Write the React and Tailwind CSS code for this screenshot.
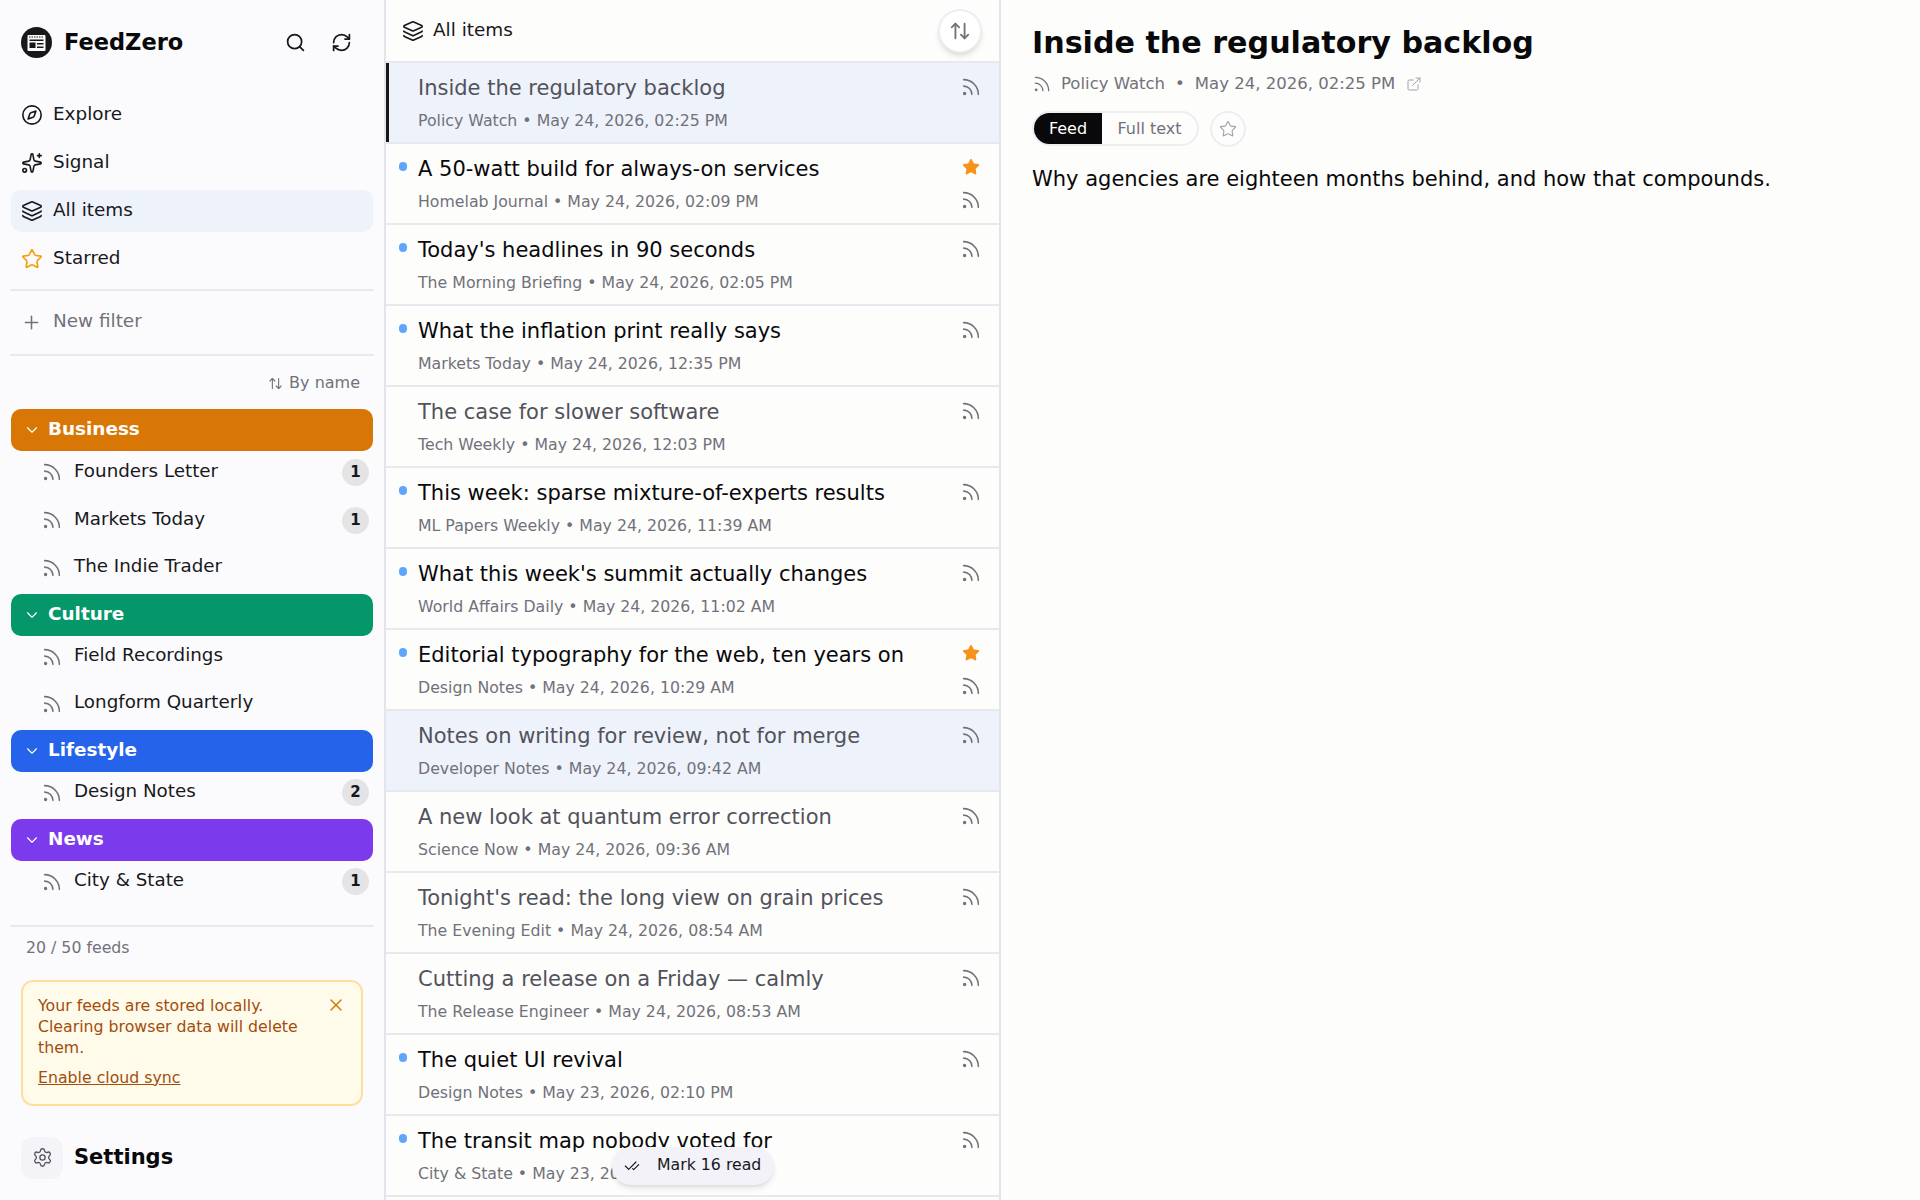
import { Search, RefreshCw, Compass, Sparkles, Layers, Star, Plus, ArrowUpDown, Rss, ChevronDown, X, Settings, CheckCheck, ExternalLink } from 'lucide-react';

const NAV_TOP = [
  { label: 'Explore', icon: <Compass size={22} strokeWidth={1.75} /> },
  { label: 'Signal', icon: <Sparkles size={22} strokeWidth={1.75} /> },
  { label: 'All items', icon: <Layers size={22} strokeWidth={1.75} />, active: true },
  { label: 'Starred', icon: <Star size={22} strokeWidth={1.75} className="text-[#f59e0b]" /> },
];

const GROUPS = [
  { name: 'Business', bg: 'bg-[#d97706]', feeds: [['Founders Letter', 1, 'h-[48px]'], ['Markets Today', 1, 'h-[48px]'], ['The Indie Trader', 0, 'h-[47px]']] },
  { name: 'Culture', bg: 'bg-[#059669]', feeds: [['Field Recordings', 0, 'h-[47px]'], ['Longform Quarterly', 0, 'h-[47px]']] },
  { name: 'Lifestyle', bg: 'bg-[#2563eb]', feeds: [['Design Notes', 2, 'h-[47px]']] },
  { name: 'News', bg: 'bg-[#7c3aed]', feeds: [['City & State', 1, 'h-[47px]']] },
];

const ITEMS = [
  { title: 'Inside the regulatory backlog', meta: 'Policy Watch • May 24, 2026, 02:25 PM', selected: true },
  { title: 'A 50-watt build for always-on services', meta: 'Homelab Journal • May 24, 2026, 02:09 PM', unread: true, starred: true },
  { title: "Today's headlines in 90 seconds", meta: 'The Morning Briefing • May 24, 2026, 02:05 PM', unread: true },
  { title: 'What the inflation print really says', meta: 'Markets Today • May 24, 2026, 12:35 PM', unread: true },
  { title: 'The case for slower software', meta: 'Tech Weekly • May 24, 2026, 12:03 PM' },
  { title: 'This week: sparse mixture-of-experts results', meta: 'ML Papers Weekly • May 24, 2026, 11:39 AM', unread: true },
  { title: "What this week's summit actually changes", meta: 'World Affairs Daily • May 24, 2026, 11:02 AM', unread: true },
  { title: 'Editorial typography for the web, ten years on', meta: 'Design Notes • May 24, 2026, 10:29 AM', unread: true, starred: true },
  { title: 'Notes on writing for review, not for merge', meta: 'Developer Notes • May 24, 2026, 09:42 AM', hover: true },
  { title: 'A new look at quantum error correction', meta: 'Science Now • May 24, 2026, 09:36 AM' },
  { title: "Tonight's read: the long view on grain prices", meta: 'The Evening Edit • May 24, 2026, 08:54 AM' },
  { title: 'Cutting a release on a Friday — calmly', meta: 'The Release Engineer • May 24, 2026, 08:53 AM' },
  { title: 'The quiet UI revival', meta: 'Design Notes • May 23, 2026, 02:10 PM', unread: true },
  { title: 'The transit map nobody voted for', meta: 'City & State • May 23, 2026, 01:44 PM', unread: true },
];

function LogoIcon() {
  return (
    <div className="w-[31px] h-[31px] rounded-full bg-[#18181b] flex items-center justify-center shrink-0">
      <svg width="19" height="18" viewBox="0 0 19 18" fill="none">
        <rect x="0.5" y="1" width="18" height="16" rx="1" fill="#fafafa" />
        <path d="M2 3h15" stroke="#18181b" strokeWidth="1" strokeDasharray="1.5 1" />
        <rect x="2.5" y="5.5" width="14" height="1.5" fill="#18181b" />
        <rect x="2.5" y="8.5" width="6" height="5.5" fill="#18181b" />
        <rect x="10" y="9" width="6.5" height="1.5" fill="#18181b" />
        <rect x="10" y="12.5" width="6.5" height="1.5" fill="#18181b" />
      </svg>
    </div>
  );
}

function GroupBlock({ group }) {
  return (
    <div>
      <div className={`h-[42px] rounded-[10px] ${group.bg} flex items-center pl-[12px] gap-[7px] text-white`}>
        <ChevronDown size={18} strokeWidth={1.5} />
        <span className="text-[18.4px] font-bold leading-none -mt-[2px]">{group.name}</span>
      </div>
      {group.feeds.map(([name, count, height]) => (
        <div key={name} className={`${height} flex items-center pl-[30px] pr-[4px] pb-[6px]`}>
          <Rss size={22} strokeWidth={1.75} className="text-[#71717a] shrink-0" />
          <span className="ml-[11px] text-[18.3px] text-[#18181b] flex-1 -mt-[3px]">{name}</span>
          {count > 0 && (
            <span className="w-[27px] h-[27px] rounded-full bg-[#e4e4e7] text-[15px] font-bold flex items-center justify-center text-[#18181b]">{count}</span>
          )}
        </div>
      ))}
    </div>
  );
}

function Sidebar() {
  return (
    <aside className="w-[386px] shrink-0 h-[1200px] bg-[#fbfbfd] border-r-2 border-[#e4e4ec] flex flex-col overflow-hidden">
      <div className="h-[85px] pl-[21px] pr-[32px] flex items-center">
        <LogoIcon />
        <span className="ml-[12px] text-[22.5px] font-bold text-[#09090b] flex-1">FeedZero</span>
        <Search size={21} strokeWidth={2} className="text-[#18181b] mr-[25px]" />
        <RefreshCw size={21} strokeWidth={2} className="text-[#18181b]" />
      </div>
      <nav className="px-[11px] pt-[9px]">
        {NAV_TOP.map(item => (
          <div key={item.label} className={`h-[42px] mb-[6px] rounded-[10px] flex items-center pl-[10px] gap-[10px] text-[18.4px] text-[#18181b] ${item.active ? 'bg-[#eef2fb]' : ''}`}>
            {item.icon}
            <span className="-mt-[3px]">{item.label}</span>
          </div>
        ))}
      </nav>
      <div className="mx-[10px] mt-[3px] border-t-2 border-[#e8e8ee]" />
      <div className="h-[63px] pl-[21px] flex items-center gap-[11px] text-[18.4px] text-[#71717a]">
        <Plus size={21} strokeWidth={1.75} />
        <span className="-mt-[3px]">New filter</span>
      </div>
      <div className="mx-[10px] border-t-2 border-[#e8e8ee]" />
      <div className="h-[53px] pr-[24px] flex items-center justify-end gap-[6px] text-[16px] text-[#71717a]">
        <ArrowUpDown size={15} strokeWidth={1.75} className="mt-[2px]" />
        <span>By name</span>
      </div>
      <div className="px-[11px] flex flex-col">
        {GROUPS.map(g => <GroupBlock key={g.name} group={g} />)}
      </div>
      <div className="mx-[10px] mt-[17px] border-t-2 border-[#e8e8ee]" />
      <div className="pl-[26px] pt-[9px] text-[15.75px] text-[#71717a]">20 / 50 feeds</div>
      <div className="mx-[21px] mt-[20px] h-[126px] rounded-[12px] border-2 border-[#fde0a0] bg-[#fffbeb] px-[15px] pt-[13px] text-[15.75px] leading-[21px] text-[#a34d0c] relative">
        <p className="w-[270px]">Your feeds are stored locally. Clearing browser data will delete them.</p>
        <a className="block mt-[9px] underline">Enable cloud sync</a>
        <X size={20} strokeWidth={1.75} className="absolute top-[13px] right-[15px] text-[#d97706]" />
      </div>
      <div className="pl-[21px] mt-[31px] flex items-center gap-[11px]">
        <div className="w-[42px] h-[42px] rounded-[12px] bg-[#f4f4f8] flex items-center justify-center">
          <Settings size={21} strokeWidth={1.5} className="text-[#52525b]" />
        </div>
        <span className="text-[21px] font-bold text-[#09090b]">Settings</span>
      </div>
    </aside>
  );
}

function ItemRow({ item }) {
  const read = !item.unread;
  const bg = item.selected || item.hover ? 'bg-[#eef2fb]' : '';
  return (
    <div className={`relative h-[81px] shrink-0 border-b-2 border-[#e8e8ee] pl-[32px] pr-[17px] pt-[9px] flex ${bg}`}>
      {item.selected && <div className="absolute left-0 top-0 bottom-0 w-[3px] bg-[#18181b]" />}
      {item.unread && <div className="absolute left-[13px] top-[18px] w-[8px] h-[9px] rounded-full bg-[#60a5fa]" />}
      <div className="flex-1 min-w-0">
        <div className={`text-[21px] leading-[32px] whitespace-nowrap ${read ? 'text-[#52525b]' : 'text-[#09090b]'}`}>{item.title}</div>
        <div className="text-[15.75px] leading-[24px] mt-[5px] text-[#71717a] whitespace-nowrap">{item.meta}</div>
      </div>
      <div className="w-[22px] flex flex-col items-center pt-[4px]">
        {item.starred && <Star size={18} fill="#f7931a" strokeWidth={1.5} className="text-[#f7931a] mt-[1px] mb-[13px]" />}
        <Rss size={22} strokeWidth={1.75} className="text-[#71717a]" />
      </div>
    </div>
  );
}

function ItemList() {
  return (
    <section className="w-[615px] shrink-0 h-[1200px] border-r-2 border-[#e4e4ec] bg-[#fdfdfc] flex flex-col overflow-hidden relative">
      <div className="h-[63px] shrink-0 border-b-2 border-[#e8e8ee] pl-[16px] pr-[17px] flex items-center">
        <Layers size={22} strokeWidth={1.75} className="text-[#18181b]" />
        <span className="ml-[9px] text-[18.4px] text-[#18181b] flex-1 -mt-[2px]">All items</span>
        <button className="w-[44px] h-[44px] rounded-full border-2 border-[#eeeef2] bg-white shadow-md flex items-center justify-center text-[#71717a]">
          <ArrowUpDown size={22} strokeWidth={2} />
        </button>
      </div>
      {ITEMS.map(item => <ItemRow key={item.title} item={item} />)}
      <div className="absolute left-[226px] top-[1147px] h-[38px] pl-[12px] pr-[13px] rounded-full bg-[#f2f2f8] shadow-md flex items-center gap-[17px] text-[15.75px] text-[#18181b]">
        <CheckCheck size={16} strokeWidth={1.75} />
        <span className="-mt-[2px]">Mark 16 read</span>
      </div>
    </section>
  );
}

function Reader() {
  return (
    <main className="flex-1 h-[1200px] bg-[#fdfdfc] pl-[31px] pt-[19px]">
      <h1 className="text-[30.15px] leading-[48px] font-bold text-[#09090b]">Inside the regulatory backlog</h1>
      <div className="flex items-center mt-[5px] text-[16.5px] text-[#71717a]">
        <Rss size={20} strokeWidth={1.5} className="mr-[9px]" />
        <span>Policy Watch</span>
        <span className="mx-[10px]">•</span>
        <span>May 24, 2026, 02:25 PM</span>
        <ExternalLink size={16} strokeWidth={1.5} className="ml-[11px] text-[#a1a1aa]" />
      </div>
      <div className="flex items-center mt-[14px] gap-[11px]">
        <div className="flex h-[35px] rounded-full border-2 border-[#eeeef2] overflow-hidden text-[16px]">
          <span className="w-[68px] bg-[#09090b] text-white flex items-center justify-center">Feed</span>
          <span className="w-[95px] text-[#71717a] flex items-center justify-center">Full text</span>
        </div>
        <div className="w-[36px] h-[36px] rounded-full border-2 border-[#eeeef2] flex items-center justify-center text-[#a1a1aa]">
          <Star size={18} strokeWidth={1.5} />
        </div>
      </div>
      <p className="mt-[15px] text-[21px] leading-[34px] text-[#09090b]">Why agencies are eighteen months behind, and how that compounds.</p>
    </main>
  );
}

export default function App() {
  return (
    <div className="flex w-[1920px] h-[1200px] overflow-hidden font-['DejaVu_Sans',sans-serif]">
      <Sidebar />
      <ItemList />
      <Reader />
    </div>
  );
}
